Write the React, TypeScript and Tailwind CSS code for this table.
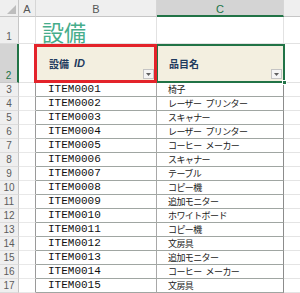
import React from "react";

const items: [string, string][] = [
  ["ITEM0001", "椅子"],
  ["ITEM0002", "レーザー プリンター"],
  ["ITEM0003", "スキャナー"],
  ["ITEM0004", "レーザー プリンター"],
  ["ITEM0005", "コーヒー メーカー"],
  ["ITEM0006", "スキャナー"],
  ["ITEM0007", "テーブル"],
  ["ITEM0008", "コピー機"],
  ["ITEM0009", "追加モニター"],
  ["ITEM0010", "ホワイトボード"],
  ["ITEM0011", "コピー機"],
  ["ITEM0012", "文房具"],
  ["ITEM0013", "追加モニター"],
  ["ITEM0014", "コーヒー メーカー"],
  ["ITEM0015", "文房具"],
];

const sans = "font-['Liberation_Sans',Arial,sans-serif]";
const jp = "font-['Noto_Sans_CJK_JP',sans-serif]";

function FilterButton() {
  return (
    <div className="absolute right-[2px] bottom-[3px] w-[11px] h-[10px] bg-[#f5f5f5] border border-[#c4c4c4] flex items-center justify-center">
      <svg width="5" height="3" viewBox="0 0 5 3">
        <polygon points="0,0 5,0 2.5,3" fill="#606060" />
      </svg>
    </div>
  );
}

function RowNum({ n, active }: { n: number; active?: boolean }) {
  return (
    <div
      className={`w-[19px] h-full flex items-end justify-center pb-[1px] text-[10px] leading-none ${sans} ${
        active
          ? "bg-[#d4d4d4] text-[#217346] border-r-2 border-r-[#217346] border-b border-b-[#c8c8c8]"
          : "bg-[#efefef] text-[#5c5c5c] border-r border-r-[#c6c6c6] border-b border-b-[#dcdcdc]"
      }`}
    >
      {n}
    </div>
  );
}

// words separated by a half-width gap, like the sheet's spacing
function Name({ text }: { text: string }) {
  const words = text.split(" ");
  return (
    <>
      {words.map((w, i) => (
        <span key={i} className={i > 0 ? "ml-[4px]" : ""}>
          {w}
        </span>
      ))}
    </>
  );
}

export default function App() {
  return (
    <div className="w-[300px] h-[293px] overflow-hidden bg-white flex flex-col">
      {/* column letters */}
      <div className="flex h-[17px] shrink-0">
        <div className="w-[19px] h-full bg-[#efefef] border-r border-b border-[#c6c6c6] flex items-end justify-end p-[2px]">
          <svg width="9" height="9" viewBox="0 0 9 9">
            <polygon points="9,0 9,9 0,9" fill="#bdbdbd" />
          </svg>
        </div>
        <div className={`w-[17px] h-full bg-[#efefef] border-r border-r-[#d6d6d6] border-b border-b-[#c6c6c6] flex items-center justify-center pt-[3px] text-[11px] text-[#555] ${sans}`}>
          A
        </div>
        <div className={`w-[121px] h-full bg-[#efefef] border-r border-r-[#d6d6d6] border-b border-b-[#c6c6c6] flex items-center justify-center pt-[3px] text-[11px] text-[#555] ${sans}`}>
          B
        </div>
        <div className={`w-[127px] h-full bg-[#d4d4d4] border-r border-r-[#d6d6d6] border-b-2 border-b-[#217346] flex items-center justify-center pt-[3px] text-[11px] text-[#217346] ${sans}`}>
          C
        </div>
        <div className="flex-1 h-full bg-[#efefef] border-b border-[#c6c6c6]" />
      </div>

      {/* row 1: title */}
      <div className="flex h-[27px] shrink-0">
        <RowNum n={1} />
        <div className="w-[17px] h-full border-r border-b border-[#e2e2e2]" />
        <div className={`w-[121px] h-full border-r border-b border-[#e2e2e2] flex items-center pl-[6px] pt-[1px] text-[22px] leading-none text-[#46ad8b] ${jp}`}>
          設備
        </div>
        <div className="w-[127px] h-full border-r border-b border-[#e2e2e2]" />
        <div className="flex-1 h-full border-b border-[#e2e2e2]" />
      </div>

      {/* row 2: table header */}
      <div className="flex h-[39px] shrink-0">
        <RowNum n={2} active />
        <div className="w-[17px] h-full border-r border-r-[#9a9a9a] border-b border-b-[#e2e2e2]" />
        <div className="relative w-[121px] h-full bg-[#f3efe0] border-r border-r-[#a8a8a8] border-b border-b-[#a0a0a0] flex items-center pl-[13px] text-[#1f3b5e] font-bold">
          <span className={`text-[10px] ${jp}`}>設備</span>
          <span className={`ml-[5px] text-[11px] italic ${sans}`}>ID</span>
          <FilterButton />
          <div className="absolute -left-[2px] top-0 -right-[1px] -bottom-[1px] border-[3px] border-[#e3232a] z-10" />
        </div>
        <div className="relative w-[127px] h-full bg-[#f3efe0] border-b border-b-[#a0a0a0] flex items-center pl-[12px] text-[#1f3b5e] font-bold">
          <span className={`text-[10px] ${jp}`}>品目名</span>
          <FilterButton />
          <div className="absolute -left-[1px] top-0 -right-[1px] -bottom-[1px] border-2 border-[#217346]" />
          <div className="absolute -right-[3px] -bottom-[3px] w-[5px] h-[5px] bg-[#217346] border border-white z-10" />
        </div>
        <div className="flex-1 h-full border-l border-l-[#8c8c8c] border-b border-b-[#e2e2e2]" />
      </div>

      {/* data rows */}
      {items.map(([id, name], i) => (
        <div key={id} className="flex h-[14px] shrink-0">
          <RowNum n={i + 3} />
          <div className="w-[17px] h-full border-r border-r-[#9a9a9a] border-b border-b-[#e8e8e8]" />
          <div className="w-[121px] h-full border-r border-r-[#a8a8a8] border-b border-b-[#a0a6a2] flex items-center pl-[12px] text-[11px] leading-none text-[#111] font-['Liberation_Mono',monospace]">
            {id}
          </div>
          <div className={`w-[127px] h-full border-r border-r-[#8c8c8c] border-b border-b-[#a0a6a2] flex items-center pl-[11px] text-[9px] leading-none tracking-[-0.6px] text-[#1a1a1a] ${jp}`}>
            <Name text={name} />
          </div>
          <div className="flex-1 h-full border-b border-[#e4e4e4]" />
        </div>
      ))}
    </div>
  );
}
